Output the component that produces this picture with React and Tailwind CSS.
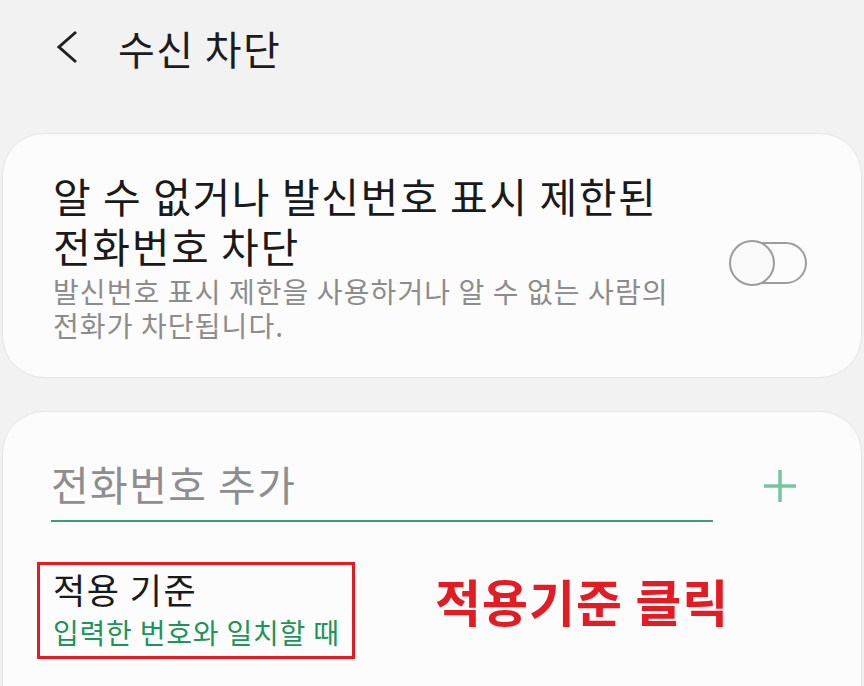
import React from 'react';

const font = { fontFamily: '"Noto Sans CJK KR", "Noto Sans", sans-serif' };

const App = () => {
  return (
    <div className="w-[864px] h-[686px] overflow-hidden bg-[#f2f2f2]" style={font}>
      {/* Header */}
      <div className="h-[133px] flex items-start pt-[25px] pl-[54px]">
        <svg className="w-[26px] h-[34px] mt-[5px]" viewBox="0 0 26 34" fill="none">
          <path d="M22 2 L5 17 L22 32" stroke="#222" strokeWidth="3" strokeLinejoin="miter" />
        </svg>
        <h1 className="ml-[38px] text-[40px] leading-[46px] text-[#1c1c1c] tracking-[1.4px]">수신 차단</h1>
      </div>

      {/* Card 1 */}
      <div className="mx-[2px] h-[245px] rounded-[42px] bg-[#fcfcfc] border border-[#e6e6e6] flex items-center pl-[50px] pr-[54px]">
        <div className="flex-1">
          <div className="text-[41px] leading-[50px] text-[#1a1a1a] tracking-[1.6px] whitespace-nowrap">
            <div>알 수 없거나 발신번호 표시 제한된</div>
            <div>전화번호 차단</div>
          </div>
          <div className="mt-[4px] text-[28px] leading-[34px] text-[#8c8c8c] tracking-[1.1px] whitespace-nowrap">
            <div>발신번호 표시 제한을 사용하거나 알 수 없는 사람의</div>
            <div>전화가 차단됩니다.</div>
          </div>
        </div>
        <div className="relative w-[78px] h-[46px] mt-[14px] shrink-0">
          <div className="absolute right-0 top-[2px] w-[76px] h-[42px] rounded-full border-[2.5px] border-[#9c9c9c]" />
          <div className="absolute left-0 top-0 w-[46px] h-[46px] rounded-full border-[2.5px] border-[#9c9c9c] bg-[#fafafa]" />
        </div>
      </div>

      {/* Card 2 */}
      <div className="mx-[2px] mt-[33px] h-[300px] rounded-t-[42px] bg-[#fcfcfc] border border-[#e6e6e6] pl-[48px] pr-[54px] pt-[44px]">
        <div className="flex items-center">
          <div className="w-[662px] h-[66px] border-b-2 border-[#3d9c73] flex items-center">
            <span className="-mt-[10px] text-[41px] leading-[46px] text-[#8e8e8e] tracking-[1.4px]">전화번호 추가</span>
          </div>
          <svg className="ml-[50px] -mt-[6px] w-[34px] h-[34px]" viewBox="0 0 34 34">
            <path d="M17 1 V33 M1 17 H33" stroke="#74c79c" strokeWidth="3.5" />
          </svg>
        </div>

        <div className="flex items-start mt-[40px]">
          <div className="-ml-[14px] w-[318px] h-[97px] border-[3px] border-[#e31b23] pl-[13px] pt-[2px]">
            <p className="text-[35px] leading-[44px] text-[#1a1a1a] tracking-[1.5px]">적용 기준</p>
            <p className="mt-[2px] text-[28px] leading-[38px] text-[#1d9459] tracking-[0.8px] whitespace-nowrap">입력한 번호와 일치할 때</p>
          </div>
          <span className="ml-[80px] mt-[10px] text-[50px] leading-[56px] font-bold text-[#e31b23] tracking-[1px]">적용기준 클릭</span>
        </div>
      </div>
    </div>
  );
};

export default App;
